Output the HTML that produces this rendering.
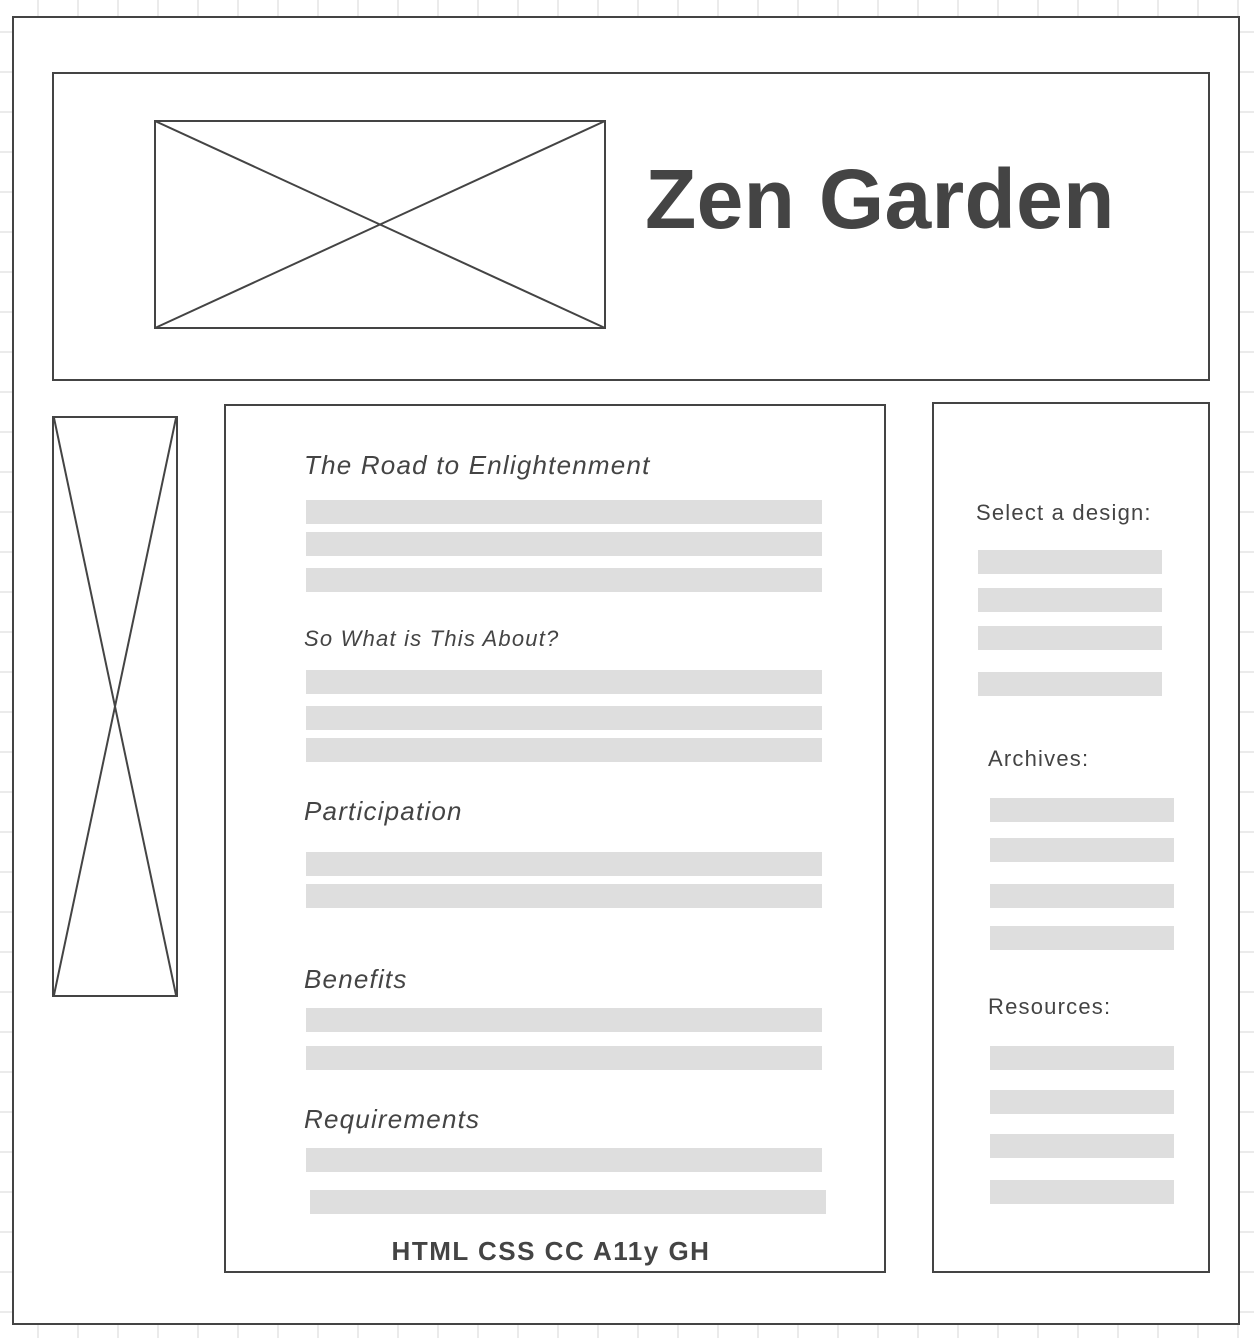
<!DOCTYPE html>
<html><head><style>
body{margin:0;width:1254px;height:1338px;position:relative;overflow:hidden;background:#fff;
background-image:linear-gradient(to right,#ebebeb 2px,transparent 2px),linear-gradient(to bottom,#ebebeb 2px,transparent 2px);
background-size:40px 40px;background-position:37px 31px;font-family:"Liberation Sans",sans-serif;color:#444}
.b{position:absolute;border:2px solid #444;box-sizing:border-box;background:#fff}
.bar{position:absolute;height:24px;background:#dedede}
.t{position:absolute;white-space:nowrap;line-height:1}
.i{font-style:italic;font-size:26px;letter-spacing:1.2px;transform:translateY(-50%)}
.s{font-size:22px;letter-spacing:1.2px;transform:translateY(-50%)}
svg{position:absolute;left:0;top:0}
</style></head><body>
<div class="b" style="left:12px;top:16px;width:1228px;height:1309px"></div>
<div class="b" style="left:52px;top:72px;width:1158px;height:309px"></div>
<div class="b" style="left:52px;top:416px;width:126px;height:581px"></div>
<div class="b" style="left:224px;top:404px;width:662px;height:869px"></div>
<div class="b" style="left:932px;top:402px;width:278px;height:871px"></div>
<svg width="1254" height="1338">
<rect x="155" y="121" width="450" height="207" fill="none" stroke="#444" stroke-width="2"/>
<line x1="155" y1="121" x2="605" y2="328" stroke="#444" stroke-width="2"/>
<line x1="605" y1="121" x2="155" y2="328" stroke="#444" stroke-width="2"/>
<line x1="54" y1="418" x2="176" y2="995" stroke="#444" stroke-width="2"/>
<line x1="176" y1="418" x2="54" y2="995" stroke="#444" stroke-width="2"/>
</svg>
<div class="t" style="left:645px;top:199px;font-size:84px;font-weight:bold;letter-spacing:0.3px;transform:translateY(-50%)">Zen Garden</div>
<div class="t i" style="left:304px;top:465px">The Road to Enlightenment</div>
<div class="t s" style="left:304px;top:639px;font-style:italic">So What is This About?</div>
<div class="t i" style="left:304px;top:811px">Participation</div>
<div class="t i" style="left:304px;top:979px">Benefits</div>
<div class="t i" style="left:304px;top:1119px">Requirements</div>
<div class="t" style="left:551px;top:1251px;font-size:26px;font-weight:bold;letter-spacing:1.5px;transform:translate(-50%,-50%)">HTML CSS CC A11y GH</div>
<div class="t s" style="left:976px;top:513px">Select a design:</div>
<div class="t s" style="left:988px;top:759px">Archives:</div>
<div class="t s" style="left:988px;top:1007px">Resources:</div>
<div class="bar" style="left:306px;width:516px;top:500px"></div>
<div class="bar" style="left:306px;width:516px;top:532px"></div>
<div class="bar" style="left:306px;width:516px;top:568px"></div>
<div class="bar" style="left:306px;width:516px;top:670px"></div>
<div class="bar" style="left:306px;width:516px;top:706px"></div>
<div class="bar" style="left:306px;width:516px;top:738px"></div>
<div class="bar" style="left:306px;width:516px;top:852px"></div>
<div class="bar" style="left:306px;width:516px;top:884px"></div>
<div class="bar" style="left:306px;width:516px;top:1008px"></div>
<div class="bar" style="left:306px;width:516px;top:1046px"></div>
<div class="bar" style="left:306px;width:516px;top:1148px"></div>
<div class="bar" style="left:310px;width:516px;top:1190px"></div>
<div class="bar" style="left:978px;width:184px;top:550px"></div>
<div class="bar" style="left:978px;width:184px;top:588px"></div>
<div class="bar" style="left:978px;width:184px;top:626px"></div>
<div class="bar" style="left:978px;width:184px;top:672px"></div>
<div class="bar" style="left:990px;width:184px;top:798px"></div>
<div class="bar" style="left:990px;width:184px;top:838px"></div>
<div class="bar" style="left:990px;width:184px;top:884px"></div>
<div class="bar" style="left:990px;width:184px;top:926px"></div>
<div class="bar" style="left:990px;width:184px;top:1046px"></div>
<div class="bar" style="left:990px;width:184px;top:1090px"></div>
<div class="bar" style="left:990px;width:184px;top:1134px"></div>
<div class="bar" style="left:990px;width:184px;top:1180px"></div>
</body></html>
